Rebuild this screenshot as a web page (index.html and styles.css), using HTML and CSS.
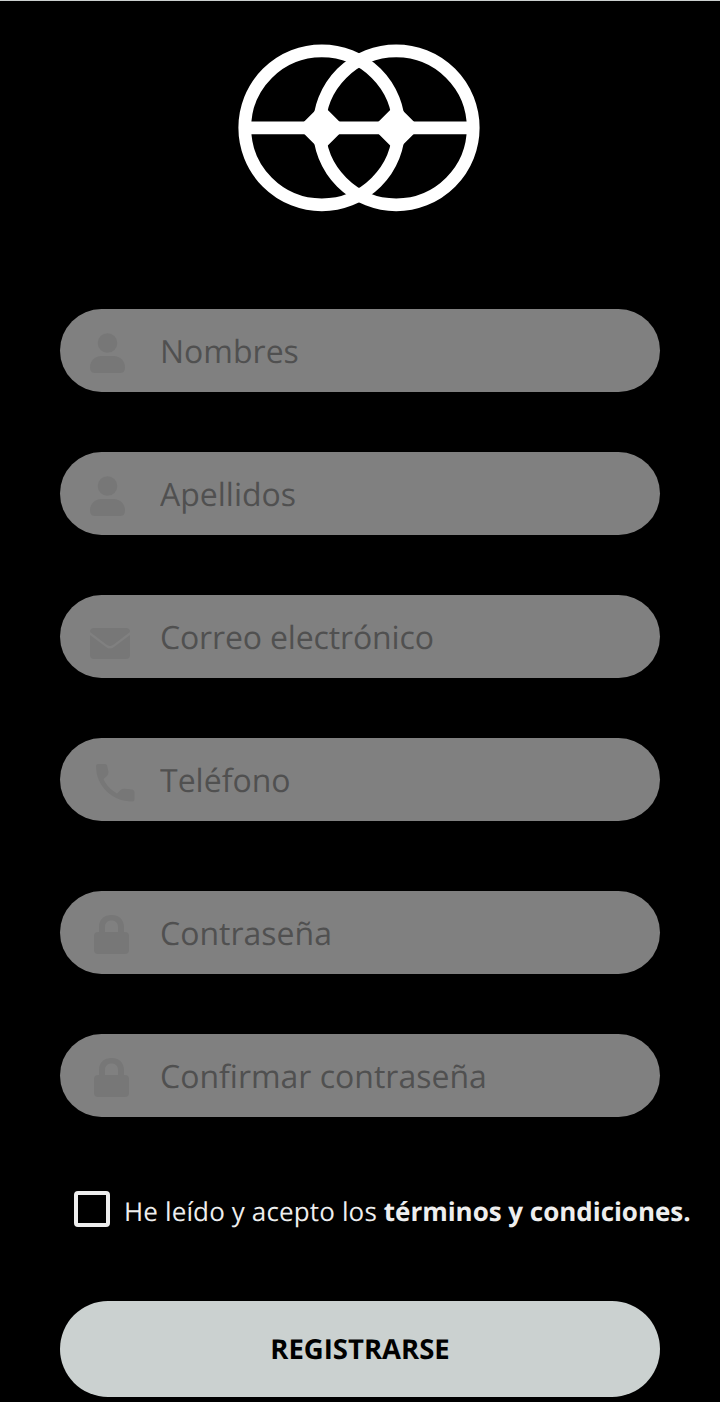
FILE: index.html
```
<!DOCTYPE html>
<html lang="es">
<head>
    <meta charset="UTF-8">
    <meta name="viewport" content="width=device-width, initial-scale=1.0">
    <title>Registro</title>
    <link rel="stylesheet" href="styles.css">
</head>
<body>
    <!-- Iconos -->
    <svg class="sprite" aria-hidden="true">
        <symbol id="icon-user" viewBox="0 0 50 45">
            <circle cx="17.5" cy="15" r="9.8"/>
            <path d="M11 28H24C30 28 35 33 35 39V40Q35 45 30 45H5Q0 45 0 40V39C0 33 5 28 11 28Z"/>
        </symbol>
        <symbol id="icon-mail" viewBox="0 0 50 45">
            <path d="M4 14H36Q40 14 40 18L23 31Q20 33.2 17 31L0 18Q0 14 4 14Z"/>
            <path d="M0 21L16 33Q20 36 24 33L40 21V41Q40 45 36 45H4Q0 45 0 41Z"/>
        </symbol>
        <symbol id="icon-phone" viewBox="0 0 50 45">
            <path d="M8 7H15Q17 7 17.2 9L18.500 15Q18.500 17 17 19L13.500 22C16 28 21 33 27 36.500L30.500 33Q32 31.500 35 31.700L42.500 32.500Q44.500 33 44.500 35V42Q44.500 44.500 42 44.500C22 44.500 6 29 6 9Q6 7 8 7Z"/>
        </symbol>
        <symbol id="icon-lock" viewBox="0 0 50 45">
            <path fill-rule="evenodd" d="M9 22V17C9 9.500 14 5 21.500 5S34 9.500 34 17V22H35Q39 22 39 26V40Q39 44 35 44H8Q4 44 4 40V26Q4 22 8 22ZM15 22H28V17C28 13 25.500 10.500 21.500 10.500S15 13 15 17Z"/>
        </symbol>
    </svg>

    <header>
        <svg class="logo" viewBox="0 0 242 168">
            <g fill="none" stroke="#fff" stroke-width="12.8">
                <circle cx="83.800" cy="83.800" r="77"/>
                <circle cx="158.200" cy="83.800" r="77"/>
                <path d="M8 83.800H234"/>
            </g>
            <path fill="#fff" d="M60 83.800L83.800 60L107.600 83.800L83.800 107.600ZM134.400 83.800L158.200 60L182 83.800L158.200 107.600Z"/>
        </svg>
    </header>

    <form class="registro">
        <label class="campo">
            <svg class="icono"><use href="#icon-user"/></svg>
            <input type="text" placeholder="Nombres">
        </label>
        <label class="campo">
            <svg class="icono"><use href="#icon-user"/></svg>
            <input type="text" placeholder="Apellidos">
        </label>
        <label class="campo correo">
            <svg class="icono"><use href="#icon-mail"/></svg>
            <input type="email" placeholder="Correo electrónico">
        </label>
        <label class="campo">
            <svg class="icono"><use href="#icon-phone"/></svg>
            <input type="tel" placeholder="Teléfono">
        </label>
        <label class="campo clave">
            <svg class="icono"><use href="#icon-lock"/></svg>
            <input type="password" placeholder="Contraseña">
        </label>
        <label class="campo">
            <svg class="icono"><use href="#icon-lock"/></svg>
            <input type="password" placeholder="Confirmar contraseña">
        </label>

        <label class="terminos">
            <input type="checkbox">
            <span>He leído y acepto los <strong>términos y condiciones.</strong></span>
        </label>

        <button type="button">REGISTRARSE</button>
    </form>
</body>
</html>
```

FILE: styles.css
```
* {
    box-sizing: border-box;
    margin: 0;
    padding: 0;
}

body {
    font-family: "Open Sans", sans-serif;
    background-color: #000;
    border-top: 1px solid #cbd0cf;
    min-height: 1402px;
    text-rendering: geometricPrecision;
}

.sprite {
    display: none;
}

header {
    display: flex;
    justify-content: center;
    padding-top: 43px;
    padding-right: 2px;
    height: 308px;
}

.logo {
    width: 242px;
    height: 168px;
}

.registro {
    display: flex;
    flex-direction: column;
    padding: 0 60px;
}

.campo {
    display: flex;
    align-items: center;
    gap: 20px;
    height: 83px;
    padding: 0 30px;
    margin-bottom: 60px;
    background-color: #808080;
    border-radius: 42px;
}

.campo.clave {
    margin-top: 10px;
}

.icono {
    width: 50px;
    height: 45px;
    flex-shrink: 0;
    fill: #777;
}

.campo input {
    flex: 1;
    min-width: 0;
    height: 60px;
    padding-top: 1px;
    border: none;
    outline: none;
    background: transparent;
    font-family: inherit;
    font-size: 32px;
    text-rendering: inherit;
    color: #505050;
}

.campo input::placeholder {
    color: #505050;
    opacity: 1;
}

.campo.correo input {
    letter-spacing: -0.15px;
}

.terminos {
    display: flex;
    align-items: center;
    gap: 14px;
    height: 36px;
    margin: 14px -40px 74px 14px;
    font-size: 26px;
    letter-spacing: 0.14px;
    color: #eee;
    white-space: nowrap;
}

.terminos strong {
    letter-spacing: -0.03px;
}

.terminos input {
    appearance: none;
    width: 36px;
    height: 36px;
    flex-shrink: 0;
    border: 4px solid #eee;
    border-radius: 4px;
}

.terminos span {
    padding-top: 3px;
}

button {
    height: 96px;
    border: none;
    border-radius: 48px;
    background-color: #cbd1d0;
    color: #000;
    font-family: inherit;
    font-size: 27.5px;
    font-weight: 700;
    text-rendering: inherit;
}
```
